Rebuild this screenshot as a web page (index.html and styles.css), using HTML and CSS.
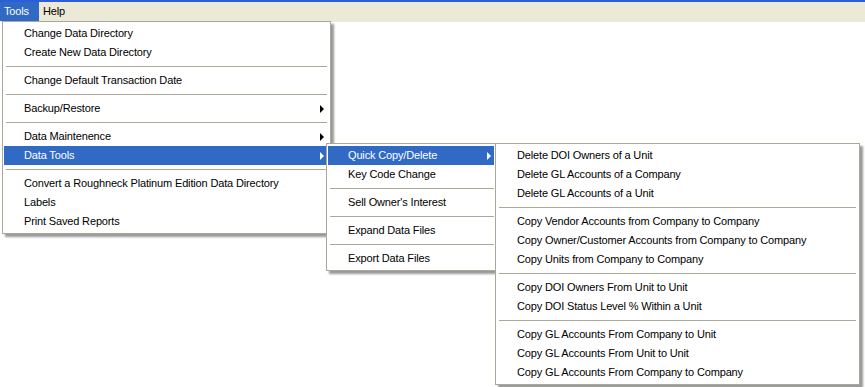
FILE: index.html
```html
<!DOCTYPE html>
<html>
<head>
<meta charset="utf-8">
<link rel="stylesheet" href="styles.css">
</head>
<body>
<div class="app">
  <div class="menubar">
    <div class="top-item active">Tools</div>
    <div class="top-item">Help</div>
  </div>
  <div class="workspace"></div>

  <div class="menu menu-tools">
    <div class="item">Change Data Directory</div>
    <div class="item">Create New Data Directory</div>
    <div class="sep"></div>
    <div class="item">Change Default Transaction Date</div>
    <div class="sep"></div>
    <div class="item has-sub">Backup/Restore<span class="arrow"></span></div>
    <div class="sep"></div>
    <div class="item has-sub">Data Maintenence<span class="arrow"></span></div>
    <div class="item has-sub selected">Data Tools<span class="arrow"></span>
      <div class="menu menu-datatools">
        <div class="item has-sub selected">Quick Copy/Delete<span class="arrow"></span>
          <div class="menu menu-quick">
            <div class="item">Delete DOI Owners of a Unit</div>
            <div class="item">Delete GL Accounts of a Company</div>
            <div class="item">Delete GL Accounts of a Unit</div>
            <div class="sep"></div>
            <div class="item">Copy Vendor Accounts from Company to Company</div>
            <div class="item">Copy Owner/Customer Accounts from Company to Company</div>
            <div class="item">Copy Units from Company to Company</div>
            <div class="sep"></div>
            <div class="item">Copy DOI Owners From Unit to Unit</div>
            <div class="item">Copy DOI Status Level % Within a Unit</div>
            <div class="sep"></div>
            <div class="item">Copy GL Accounts From Company to Unit</div>
            <div class="item">Copy GL Accounts From Unit to Unit</div>
            <div class="item">Copy GL Accounts From Company to Company</div>
          </div>
        </div>
        <div class="item">Key Code Change</div>
        <div class="sep"></div>
        <div class="item">Sell Owner's Interest</div>
        <div class="sep"></div>
        <div class="item">Expand Data Files</div>
        <div class="sep"></div>
        <div class="item">Export Data Files</div>
      </div>
    </div>
    <div class="sep"></div>
    <div class="item">Convert a Roughneck Platinum Edition Data Directory</div>
    <div class="item">Labels</div>
    <div class="item">Print Saved Reports</div>
  </div>
</div>
</body>
</html>
```

FILE: styles.css
```css
* { box-sizing: border-box; }
html, body { margin: 0; padding: 0; }
body {
  width: 865px;
  height: 387px;
  overflow: hidden;
  background: #ffffff;
  font-family: Tahoma, "Liberation Sans", Arial, sans-serif;
  font-size: 11px;
  letter-spacing: -0.15px;
  color: #000;
}
.app {
  position: relative;
  width: 865px;
  height: 387px;
}
.menubar {
  height: 22px;
  border-top: 2px solid #2b5fd9;
  background: #ece9d8;
  display: flex;
  align-items: flex-start;
}
.top-item {
  padding: 0 0 0 4px;
  line-height: 19px;
  height: 19px;
}
.top-item.active {
  width: 39px;
  background: #316ac5;
  color: #fff;
}
.workspace { flex: 1; }

.menu {
  position: absolute;
  background: #fff;
  border: 1px solid #aca899;
  padding: 2px 3px 2px 1px;
  box-shadow: 3px 3px 2px rgba(0, 0, 0, 0.4);
  z-index: 10;
}
.menu-tools {
  left: 2px;
  top: 21px;
  width: 329px;
}
.menu-datatools {
  left: calc(100% - 1px);
  top: -3px;
  width: 172px;
}
.menu-quick {
  left: calc(100% + 1px);
  top: -3px;
  width: 365px;
  z-index: 11;
}
.item {
  position: relative;
  height: 19px;
  line-height: 19px;
  padding-left: 20px;
  white-space: nowrap;
  color: #000;
}
.item.selected {
  background: #316ac5;
  color: #fff;
}
.item.selected .menu .item { color: #000; }
.item.selected .menu .item.selected { color: #fff; }
.arrow {
  position: absolute;
  right: 3px;
  top: 6px;
  width: 0;
  height: 0;
  border-top: 4px solid transparent;
  border-bottom: 4px solid transparent;
  border-left: 4px solid #000;
}
.item.selected > .arrow { border-left-color: #fff; }
.sep {
  height: 9px;
  position: relative;
}
.sep::after {
  content: "";
  position: absolute;
  left: 2px;
  right: 0;
  top: 4px;
  border-top: 1px solid #aca899;
}
```
